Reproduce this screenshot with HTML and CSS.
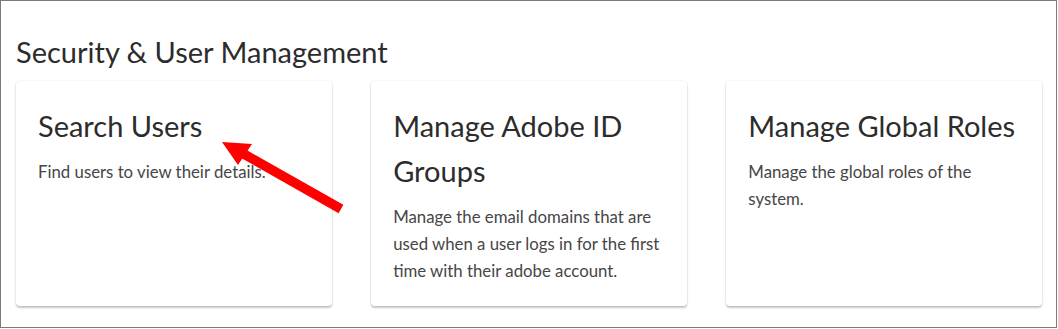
FILE: index.html
```html
<!DOCTYPE html>
<html lang="en">
<head>
<meta charset="utf-8">
<title>Security &amp; User Management</title>
<link rel="stylesheet" href="styles.css">
</head>
<body>
<div class="frame">
  <h2 class="section-title">Security &amp; User Management</h2>
  <div class="cards">
    <div class="card">
      <h3 class="card-title">Search Users</h3>
      <p class="card-desc">Find users to view their details.</p>
    </div>
    <div class="card">
      <h3 class="card-title">Manage Adobe ID Groups</h3>
      <p class="card-desc">Manage the email domains that are used when a user logs in for the first time with their adobe account.</p>
    </div>
    <div class="card">
      <h3 class="card-title">Manage Global Roles</h3>
      <p class="card-desc">Manage the global roles of the system.</p>
    </div>
  </div>
  <svg class="annotation" width="1057" height="328" viewBox="0 0 1057 328" aria-hidden="true">
    <line x1="243" y1="153.5" x2="341" y2="209" stroke="#ff0000" stroke-width="9.5"/>
    <polygon points="222,142 252,144 238,165" fill="#ff0000"/>
  </svg>
</div>
</body>
</html>
```

FILE: styles.css
```css
html, body {
  margin: 0;
  padding: 0;
  background: #ffffff;
}

body {
  font-family: "Lato", "Open Sans", sans-serif;
}

.frame {
  position: relative;
  width: 1057px;
  height: 328px;
  box-sizing: border-box;
  border: 1px solid #7b7b7b;
  padding: 34px 14px 0 15px;
  background: #ffffff;
}

.section-title {
  margin: 0 0 12px 0;
  font-size: 29px;
  font-weight: 400;
  line-height: 34px;
  color: #2c2c2c;
}

.cards {
  display: grid;
  grid-template-columns: repeat(3, 1fr);
  column-gap: 39.5px;
}

.card {
  background: #ffffff;
  border-radius: 4px;
  padding: 22px 18px 22px 22px;
  box-shadow: 0 0 2px rgba(0, 0, 0, 0.13), 0 2px 2px rgba(0, 0, 0, 0.22);
  min-height: 225px;
  box-sizing: border-box;
}

.card-title {
  margin: 0 0 10px 0;
  font-size: 29px;
  font-weight: 400;
  line-height: 45px;
  color: #2c2c2c;
}

.card-desc {
  margin: 0;
  font-size: 16.8px;
  line-height: 27px;
  color: #464646;
}

.annotation {
  position: absolute;
  left: -1px;
  top: -1px;
  pointer-events: none;
}
```
